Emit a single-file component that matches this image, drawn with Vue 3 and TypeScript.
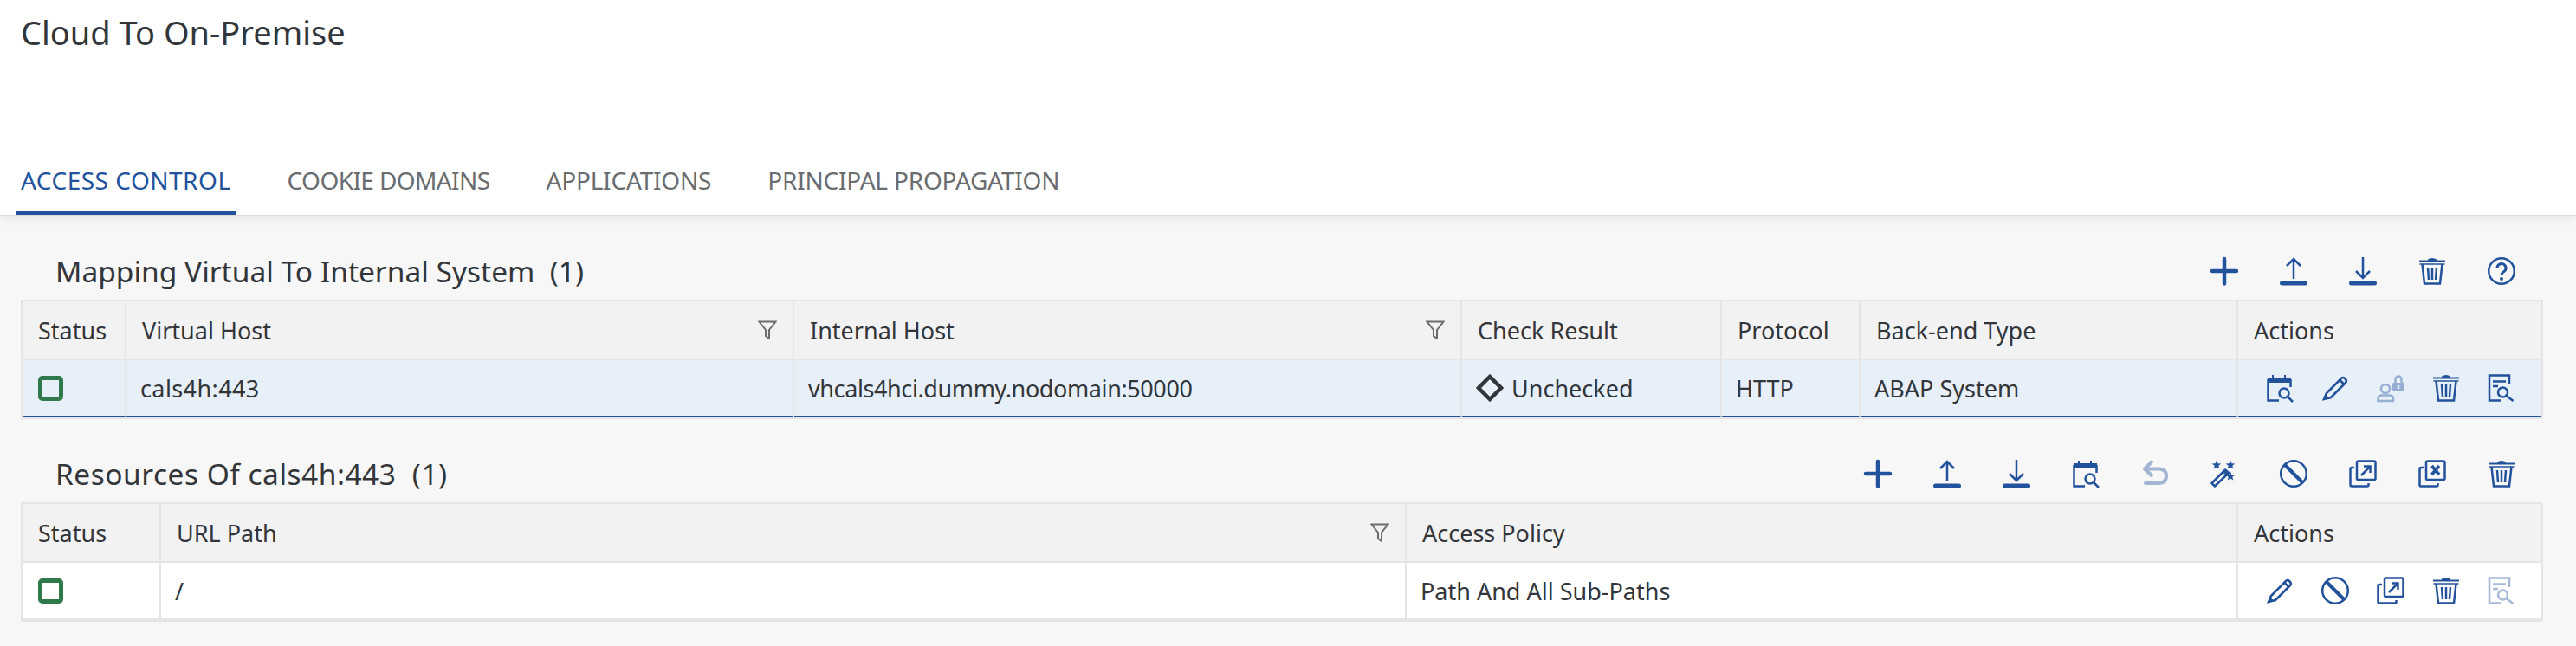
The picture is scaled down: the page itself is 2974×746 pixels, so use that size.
<template>
  <div class="page">
    <header class="page-header">
      <h1 class="page-title">Cloud To On-Premise</h1>
      <nav class="tabs">
        <div v-for="(tab, i) in tabs" :key="tab" class="tab" :class="{ active: i === 0 }">{{ tab }}</div>
      </nav>
    </header>

    <main class="content">
      <!-- mapping table -->
      <section class="toolbar">
        <h2 class="section-title">Mapping Virtual To Internal System&nbsp; (1)</h2>
        <div class="tool-icons">
          <svg v-for="name in mappingTools" :key="name" class="icon" viewBox="0 0 32 32" v-html="icons[name]"></svg>
        </div>
      </section>
      <div class="table mapping-grid">
        <div class="cell head">Status</div>
        <div class="cell head">Virtual Host<svg class="filter" viewBox="0 0 22 22"><path d="M1.500 1.500H20.500L13 11V21L9 18V11Z" /></svg></div>
        <div class="cell head">Internal Host<svg class="filter" viewBox="0 0 22 22"><path d="M1.500 1.500H20.500L13 11V21L9 18V11Z" /></svg></div>
        <div class="cell head">Check Result</div>
        <div class="cell head">Protocol</div>
        <div class="cell head">Back-end Type</div>
        <div class="cell head last">Actions</div>

        <div class="cell body selected"><span class="status-box"></span></div>
        <div class="cell body selected virtual">cals4h:443</div>
        <div class="cell body selected host">vhcals4hci.dummy.nodomain:50000</div>
        <div class="cell body selected">
          <svg class="diamond" viewBox="0 0 32 32"><path d="M16 3L29 16L16 29L3 16Z" /></svg>Unchecked
        </div>
        <div class="cell body selected">HTTP</div>
        <div class="cell body selected">ABAP System</div>
        <div class="cell body selected actions">
          <svg v-for="a in mappingActions" :key="a.name" class="icon" :class="{ disabled: a.disabled }" viewBox="0 0 32 32" v-html="icons[a.name]"></svg>
        </div>
      </div>

      <!-- resources table -->
      <section class="toolbar">
        <h2 class="section-title resources">Resources Of cals4h:443&nbsp; (1)</h2>
        <div class="tool-icons">
          <svg v-for="t in resourceTools" :key="t.name" class="icon" :class="{ disabled: t.disabled }" viewBox="0 0 32 32" v-html="icons[t.name]"></svg>
        </div>
      </section>
      <div class="table resource-grid">
        <div class="cell head">Status</div>
        <div class="cell head">URL Path<svg class="filter" viewBox="0 0 22 22"><path d="M1.500 1.500H20.500L13 11V21L9 18V11Z" /></svg></div>
        <div class="cell head">Access Policy</div>
        <div class="cell head last">Actions</div>

        <div class="cell body"><span class="status-box"></span></div>
        <div class="cell body">/</div>
        <div class="cell body">Path And All Sub-Paths</div>
        <div class="cell body actions">
          <svg v-for="a in resourceActions" :key="a.name" class="icon" :class="{ disabled: a.disabled }" viewBox="0 0 32 32" v-html="icons[a.name]"></svg>
        </div>
      </div>
    </main>
  </div>
</template>

<script setup lang="ts">
const tabs = ['Access Control', 'Cookie Domains', 'Applications', 'Principal Propagation']

const star = (x: number, y: number) =>
  `<path class="solid" transform="translate(${x} ${y})" d="M0-5.500L1.500-1.700 5.300-1.600 2.300.8 3.300 4.600 0 2.400-3.300 4.600-2.300.8-5.300-1.600-1.500-1.700Z"/>`

const trash =
  '<path class="solid" d="M11 2.500Q16-.5 21 2.500V4H11Z"/><path d="M1 4.500H31" stroke-width="2"/><path d="M1.500 8H30.500" stroke-width="1.500"/>' +
  '<path d="M4.500 8L7 30.500H25L27.500 8" stroke-width="2.500"/><path d="M11 12L12 26M16 12V26M21 12L20 26" stroke-width="2.500"/>'

const openBack = '<path d="M6 9H3Q1.500 9 1.500 10.500V29Q1.500 30.500 3 30.500H21Q22.500 30.500 22.500 29V27" stroke-width="2.500"/>'
const frontBox = '<rect x="9" y="1.500" width="21.500" height="21.500" rx="1.500" stroke-width="2.500"/>'

const icons: Record<string, string> = {
  plus: '<path d="M16 2V30.500M2 16H30" stroke-width="4.500" stroke-linecap="round"/>',
  upload:
    '<path d="M16 25V2M8 10L16 2L24 10" stroke-width="2.500"/><path d="M2.500 30H29.500" stroke-width="5" stroke-linecap="round"/>',
  download:
    '<path d="M16 0V24M8 16L16 24L24 16" stroke-width="2.500"/><path d="M2.500 30H29.500" stroke-width="5" stroke-linecap="round"/>',
  trash,
  help:
    '<circle cx="16" cy="16" r="14.800" stroke-width="2.500"/><path d="M11 12.500A5 5 0 1 1 19 16.500Q16 18 16 21" stroke-width="3"/><circle class="solid" cx="16" cy="25" r="2"/>',
  calendar:
    '<path class="solid" d="M2 4H7V1H9V4H21V1H23V4H29V10H2Z"/><path d="M2.500 6V30.500H15M28.500 6V15" stroke-width="2.500"/><circle cx="21" cy="22" r="5.500" stroke-width="2.500"/><path d="M25 26L31 32" stroke-width="2.500"/>',
  pencil:
    '<path d="M3 29L6 22L23 5Q25 3 27 5L28 6Q30 8 28 10L11 27Z" stroke-width="2.500"/><path class="solid" d="M2 30L4.500 23L9.500 28Z"/><path d="M21.500 7L26.500 12" stroke-width="2.500"/>',
  userLock:
    '<circle cx="10" cy="17" r="5" stroke-width="2.500"/><path d="M1.500 31V28Q1.500 24.500 6 24.500H14Q19 24.500 19 28V31Z" stroke-width="2.500"/>' +
    '<path class="solid" d="M18 11.500Q18 10 19.500 10H31Q32 10 32 11.500V18Q32 19.500 31 19.500H19.500Q18 19.500 18 18Z"/><path d="M21.500 10V6A3.500 3.500 0 0 1 28.500 6V10" stroke-width="2.500"/><path d="M25 13V17" stroke="#e7eff8" stroke-width="2.500"/>',
  docSearch:
    '<path d="M25 12V1.500H2V30.500H15" stroke-width="2.500"/><path d="M6 8.500H21M6 14H12" stroke-width="2.500"/><circle cx="17.500" cy="21" r="5.500" stroke-width="2.500"/><path d="M21.500 25L29.500 31" stroke-width="2.500"/>',
  undo: '<path d="M12 2.500L4 10.500L12 18M5 10.500H20Q29 10.500 29 18.500Q29 27 20 27H5" stroke-width="4" stroke-linecap="round" stroke-linejoin="round"/>',
  wand:
    star(7, 6) + star(23, 6) + star(23, 19) +
    '<path d="M1.500 27L17 11.500L21 15L5 30.500Z" stroke-width="2.500" stroke-linejoin="round"/><path class="solid" d="M14 14.500L17 11.500L21 15L18 18Z"/>',
  block:
    '<circle cx="16" cy="16" r="14.800" stroke-width="2.500"/><path d="M6 6L26 26" stroke-width="4"/>',
  open: openBack + frontBox + '<path d="M14 18L24.500 7.500M17 7.500H24.500V15" stroke-width="2.500"/>',
  closeCopy: openBack + frontBox + '<path d="M15.500 7L24 17M24 7L15.500 17" stroke-width="3.500"/>'
}

const mappingTools = ['plus', 'upload', 'download', 'trash', 'help']
const mappingActions = [
  { name: 'calendar' },
  { name: 'pencil' },
  { name: 'userLock', disabled: true },
  { name: 'trash' },
  { name: 'docSearch' }
]
const resourceTools = [
  { name: 'plus' },
  { name: 'upload' },
  { name: 'download' },
  { name: 'calendar' },
  { name: 'undo', disabled: true },
  { name: 'wand' },
  { name: 'block' },
  { name: 'open' },
  { name: 'closeCopy' },
  { name: 'trash' }
]
const resourceActions = [
  { name: 'pencil' },
  { name: 'block' },
  { name: 'open' },
  { name: 'trash' },
  { name: 'docSearch', disabled: true }
]
</script>

<style>
body {
  margin: 0;
  background: #f7f7f7;
}
</style>

<style scoped>
.page {
  min-height: 100vh;
  background: #f7f7f7;
  font-family: 'Noto Sans', sans-serif;
  color: #32363a;
}

.page-header {
  height: 248px;
  display: flex;
  flex-direction: column;
  justify-content: space-between;
  background: #fff;
  border-bottom: 2px solid #d9d9d9;
  box-shadow: 0 2px 12px rgba(0, 0, 0, 0.08);
  position: relative;
}

.page-title {
  margin: 0;
  padding: 12px 24px 0;
  font-size: 38px;
  line-height: 50px;
  font-weight: 400;
}

.tabs {
  display: flex;
  gap: 53px;
  padding-left: 18px;
}

.tab {
  padding: 0 6px 17px;
  font-size: 28px;
  line-height: 38px;
  letter-spacing: -0.2px;
  color: #6a6d70;
  text-transform: uppercase;
  border-bottom: 4px solid transparent;
}

.tab:nth-child(2) {
  letter-spacing: -0.6px;
}

.tab.active {
  letter-spacing: 0.5px;
  color: #22529b;
  border-bottom-color: #22529b;
}

.content {
  padding: 0 38px 0 24px;
}

.toolbar {
  height: 96px;
  display: flex;
  align-items: center;
  justify-content: space-between;
  padding: 30px 32px 0 40px;
  box-sizing: border-box;
}

.section-title {
  margin: 0;
  font-size: 33.5px;
  font-weight: 400;
}

.section-title.resources {
  letter-spacing: 0.5px;
}

.tool-icons {
  display: flex;
  gap: 48px;
}

.icon {
  width: 32px;
  height: 32px;
  flex: none;
  fill: none;
  stroke: #22529b;
  overflow: visible;
}

.icon :deep(.solid) {
  fill: #22529b;
  stroke: none;
}

.icon.disabled {
  opacity: 0.4;
}

.table {
  display: grid;
  border: 2px solid #e5e5e5;
}

.mapping-grid {
  grid-template-columns: 120px 771px 771px 300px 160px 436px 1fr;
  grid-template-rows: 68px 66px;
}

.resource-grid {
  grid-template-columns: 160px 1438px 960px 1fr;
  grid-template-rows: 68px 64px;
  border-bottom-width: 4px;
}

.cell {
  display: flex;
  align-items: center;
  box-sizing: border-box;
  font-size: 27px;
  white-space: nowrap;
  border-right: 2px solid #e5e5e5;
}

.head {
  padding: 0 18px;
  background: #f2f2f2;
  border-bottom: 2px solid #e5e5e5;
  justify-content: space-between;
}

.head.last {
  border-right: none;
}

.body {
  padding: 0 16px;
  background: #fff;
}

.selected {
  background: #e7eff8;
  border-bottom: 2px solid #22529b;
}

.virtual {
  letter-spacing: 0.4px;
}

.host {
  letter-spacing: -0.4px;
}

.status-box {
  width: 29px;
  height: 29px;
  margin-left: 2px;
  box-sizing: border-box;
  border: 5px solid #30794a;
  border-radius: 5px;
}

.filter {
  width: 22px;
  height: 22px;
  flex: none;
  fill: none;
  stroke: #6a6d70;
  stroke-width: 2;
}

.diamond {
  width: 32px;
  height: 32px;
  flex: none;
  margin-right: 9px;
  fill: none;
  stroke: #32363a;
  stroke-width: 4.5;
}

.actions {
  justify-content: flex-end;
  gap: 32px;
  padding: 0 30px 0 0;
  border-right: none;
}
</style>
